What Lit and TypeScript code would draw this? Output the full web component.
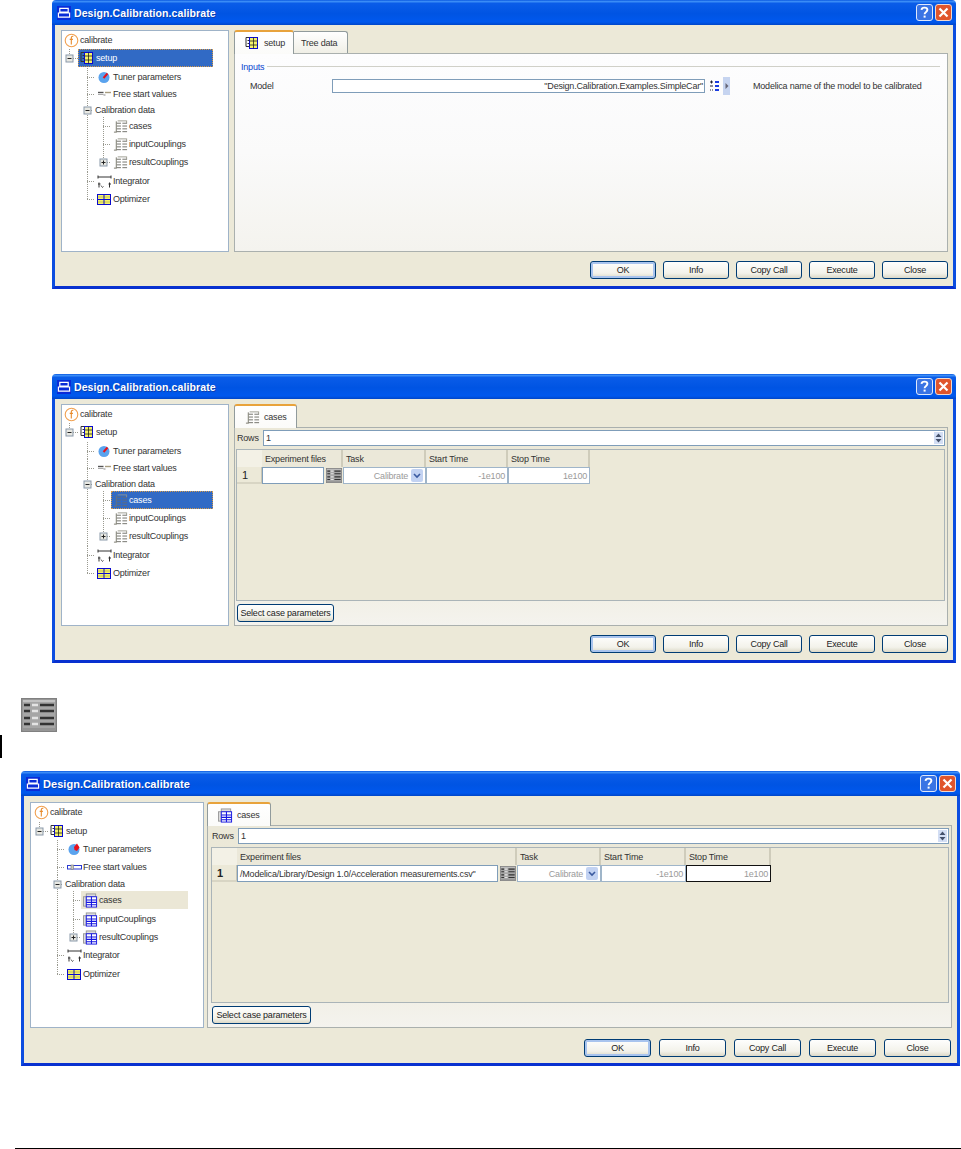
import { LitElement, html, css, svg } from "lit";
import { customElement } from "lit/decorators.js";

type IconName = "fn" | "setup" | "tuner" | "free" | "table" | "integrator" | "optimizer" | "none";
interface Row {
  label: string; icon: IconName; gutter: number;
  v: [number, boolean][]; // vertical line x, full height?
  h?: [number, number]; exp?: [number, string];
}
const TREE: Row[] = [
  { label: "calibrate", icon: "fn", gutter: 0, v: [] },
  { label: "setup", icon: "setup", gutter: 16, v: [[7, false]], h: [11, 16], exp: [7, "-"] },
  { label: "Tuner parameters", icon: "tuner", gutter: 33, v: [[25, true]], h: [25, 33] },
  { label: "Free start values", icon: "free", gutter: 33, v: [[25, true]], h: [25, 33] },
  { label: "Calibration data", icon: "none", gutter: 31, v: [[25, true]], h: [29, 31], exp: [25, "-"] },
  { label: "cases", icon: "table", gutter: 49, v: [[25, true], [41, true]], h: [41, 49] },
  { label: "inputCouplings", icon: "table", gutter: 49, v: [[25, true], [41, true]], h: [41, 49] },
  { label: "resultCouplings", icon: "table", gutter: 49, v: [[25, true], [41, false]], h: [45, 49], exp: [41, "+"] },
  { label: "Integrator", icon: "integrator", gutter: 33, v: [[25, true]], h: [25, 33] },
  { label: "Optimizer", icon: "optimizer", gutter: 33, v: [[25, false]], h: [25, 33] },
];

function windowIcon() {
  return html`<svg class="winicon" width="14" height="14" viewBox="0 0 15 15">
    <rect width="15" height="15" fill="#0a2bd8"/>
    <path d="M3 2.500h9v4H3zM1.500 7.500h12v4.500h-12z" fill="none" stroke="#fff" stroke-width="1.300"/>
  </svg>`;
}
function helpBtn() {
  return html`<svg width="17" height="17" viewBox="0 0 17 17">
    <rect x=".5" y=".5" width="16" height="16" rx="2.5" fill="#3a74e4" stroke="#dfe8fb"/>
    <path d="M5.5 5.8C5.8 3 11.3 2.9 11.4 5.8 11.5 8 8.6 7.800 8.600 10.200" fill="none" stroke="#fff" stroke-width="1.900"/>
    <rect x="7.600" y="11.600" width="2" height="2" fill="#fff"/>
  </svg>`;
}
function closeBtn() {
  return html`<svg width="17" height="17" viewBox="0 0 17 17">
    <rect x=".5" y=".5" width="16" height="16" rx="2.500" fill="#e0552c" stroke="#f2d8cc"/>
    <path d="M4.500 4.500l8 8M12.500 4.500l-8 8" stroke="#fff" stroke-width="2.200"/>
  </svg>`;
}
function expander(x: number, sym: string) {
  return svg`<rect x="${x - 3.5}" y="-3.500" width="7" height="7" fill="#e8e8e2" stroke="#8a99aa"/>
    <path d="M${x - 2} 0h4" stroke="#222"/>
    ${sym === "+" ? svg`<path d="M${x} -2v4" stroke="#222"/>` : null}`;
}
function icon(name: IconName, blue: boolean, dim = false) {
  switch (name) {
    case "fn":
      return html`<svg width="15" height="15" viewBox="0 0 15 15">
        <circle cx="7.500" cy="7.500" r="6.300" fill="#fff" stroke="#f0a050" stroke-width="1.100"/>
        <path d="M9.300 3.400C7.800 3 7.300 4 7.300 5v6.500M5.700 6.400h3.200" fill="none" stroke="#e88a2a" stroke-width="1.100"/>
      </svg>`;
    case "setup":
      return html`<svg width="15" height="14" viewBox="0 0 15 14">
        <path d="M4.500 1.500H1v9h3.500" fill="none" stroke="#333"/>
        <path d="M2.500 4.500h2M2.500 7.500h2" stroke="#333"/>
        <rect x="4.500" y="1.500" width="8" height="11" fill="#f4f26a" stroke="#0a0ad0"/>
        <path d="M8.500 1.500v11M4.500 5h8M4.500 9h8" stroke="#222" stroke-width=".8"/>
      </svg>`;
    case "tuner":
      return html`<svg width="15" height="14" viewBox="0 0 15 14">
        <circle cx="7" cy="7.500" r="5.500" fill="#5aa3ee"/>
        ${blue
          ? svg`<path d="M7 5L10 1.500 12.500 5.500 10 9 7.500 8z" fill="#e8101a"/>`
          : svg`<path d="M6.500 8L10.500 3.500" stroke="#e8101a" stroke-width="2"/>`}
      </svg>`;
    case "free":
      return blue
        ? html`<svg width="15" height="14" viewBox="0 0 15 14">
            <rect x=".5" y="5.500" width="14" height="3.500" fill="#fff" stroke="#2a3ad0"/>
            <rect x="4" y="5" width="2.500" height="4.500" fill="#c8c8c0" stroke="#777" stroke-width=".6"/>
          </svg>`
        : html`<svg width="15" height="14" viewBox="0 0 15 14">
            <path d="M1 5.500h5.500" stroke="#555" stroke-width="1.400"/>
            <path d="M1 7.500h5.500" stroke="#aaa"/>
            <path d="M8 5.500h6" stroke="#a89d80" stroke-width="1.400"/>
            <path d="M6.500 8h2" stroke="#888"/>
          </svg>`;
    case "table":
      return blue
        ? html`<svg width="16" height="15" viewBox="0 0 16 15">
            <rect x="3.500" y=".5" width="10" height="3" fill="#ddd" stroke="#999"/>
            <rect x=".5" y="3.500" width="3" height="10" fill="#ddd" stroke="#999"/>
            <rect x="3.500" y="3.500" width="11" height="11" fill="#fff" stroke="#1414e0"/>
            <path d="M3.500 7h11M3.500 9.500h11M3.500 12h11M9 3.500v11" stroke="#1414e0" stroke-width="1.100"/>
          </svg>`
        : html`<svg class=${dim ? "dim" : ""} width="16" height="15" viewBox="0 0 16 15">
            <path d="M3.500 2v11.500M1 13.500h3" stroke="#77766a" fill="none"/>
            <path d="M4 4h4.500M10 4h5M4 7h4.500M10 7h5M4 10h4.500M10 10h5M4 13h4.500M10 13h5" stroke="#6e6e66"/>
            <path d="M5 1.500h9" stroke="#9a9a8e"/>
            <path d="M14.500 1v3" stroke="#9a9a8e"/>
          </svg>`;
    case "integrator":
      return html`<svg width="15" height="15" viewBox="0 0 15 15">
        <path d="M1 1.500v3M14 1.500v3M1 3h13" stroke="#333" fill="none"/>
        <path d="M2 8.500v5M1 10h2.500M12.500 8.500v5M11.500 10h2.500" stroke="#333" fill="none"/>
        <path d="M4 11.500l1.500 2 1-1" stroke="#555" fill="none"/>
      </svg>`;
    case "optimizer":
      return html`<svg width="15" height="14" viewBox="0 0 15 14">
        <rect x=".5" y="2.500" width="13" height="10" fill="#f4f26a" stroke="#0a0ad0"/>
        <path d="M7 2.500v10M.5 7.500h13" stroke="#0a0ad0"/>
        <path d="M.5 5h13M.5 10h13" stroke="#333" stroke-width=".5" opacity=".5"/>
      </svg>`;
    default:
      return null;
  }
}
function gridButton(w: number, h: number) {
  return html`<svg width=${w} height=${h} viewBox="0 0 36 34" preserveAspectRatio="none">
    <rect width="36" height="34" fill="#a6a6a6"/>
    <path d="M2 2h32v2H2z" fill="#c2c2c2"/>
    <path d="M2 30h32v2H2z" fill="#959595"/>
    <rect x=".7" y=".7" width="34.600" height="32.600" fill="none" stroke="#808080" stroke-width="1.400"/>
    <g stroke-width="2.600">
      <path d="M3 7h6M19 7h14M3 13h6M19 13h14M3 20h6M19 20h14M3 26h6M19 26h14" stroke="#333"/>
      <path d="M11 7h6M11 13h6M11 20h6M11 26h6" stroke="#e4e4e4"/>
    </g>
  </svg>`;
}

@customElement("app-root")
export class AppRoot extends LitElement {
  static styles = css`
    :host { display: block; width: 961px; height: 1149px; background: #fff; font-family: "Liberation Sans", Arial, sans-serif; font-size: 9px; letter-spacing: -.2px; color: #333; overflow: hidden; }
    .page { display: flex; flex-direction: column; height: 1149px; }
    .dialog { display: flex; flex-direction: column; flex: none; border-radius: 4px 4px 0 0; }
    .d1 { width: 904px; height: 289px; margin-left: 52px; }
    .d2 { width: 904px; height: 289px; margin-left: 52px; margin-top: 85px; }
    .d3 { width: 939px; height: 295px; margin-left: 21px; }
    .titlebar { flex: none; height: 25px; display: flex; align-items: center; gap: 3px; padding: 0 4px 0 5px;
      background: linear-gradient(#0a58e0 0, #3a8cf6 6%, #0a5ce8 14%, #0054e3 55%, #0058ee 88%, #0046c8 100%);
      border-radius: 4px 4px 0 0; }
    .title { flex: 1; color: #fff; font-weight: 700; font-size: 10.500px; letter-spacing: .1px; white-space: nowrap; text-shadow: 1px 1px 0 #0a3fb0; }
    .d3 .title { font-size: 11px; letter-spacing: .05px; }
    .winbtns { display: flex; gap: 2px; }
    .winbtns svg, .winicon { display: block; }
    .client { flex: 1; min-height: 0; display: flex; flex-direction: column; background: #ece9d8; border: 3px solid #0c4de0; border-top: 0; border-bottom-color: #0831d0; padding: 5px 5px 7px 6px; }
    .d3 .client { padding: 6px 5px 6px 6px; }
    .main { flex: 1; min-height: 0; display: flex; gap: 5px; }
    .d3 .main { gap: 3px; }
    .tree { flex: none; width: 168px; box-sizing: border-box; background: #fff; border: 1px solid #9fb3c8; overflow: hidden; }
    .d3 .tree { width: 174px; padding-left: 1px; }
    .row { display: flex; align-items: flex-start; }
    .row svg.gut { flex: none; display: block; overflow: visible; }
    .node { display: flex; align-items: center; gap: 1px; height: 18px; padding: 0 2px; white-space: nowrap; box-sizing: border-box; position: relative; flex: none; }
    .slot { flex: none; width: 15px; display: flex; justify-content: center; }
    .slot svg { display: block; }
    .slot svg.dim { opacity: .85; }
    .sel { background: #316ac5; color: #fff; outline: 1px dotted #d59a4a; outline-offset: -1px; flex: 1; margin-right: 15px; }
    .selsoft { background: #ebe7d6; flex: 1; margin-right: 15px; }
    .right { flex: 1; min-width: 0; display: flex; flex-direction: column; }
    .tabs { flex: none; height: 23px; display: flex; align-items: flex-end; }
    .tab { flex: none; box-sizing: border-box; display: flex; align-items: center; gap: 4px; position: relative; white-space: nowrap; }
    .tab.on { height: 24px; margin-bottom: -1px; width: 60px; padding-left: 10px; background: linear-gradient(#fff, #fbfbf9); border: 1px solid #919b9c; border-top: 2px solid #e8a33c; border-bottom: 0; border-radius: 3px 3px 0 0; z-index: 1; }
    .tab.w2 { width: 63px; }
    .tab.w3 { width: 64px; }
    .tab.off { height: 22px; width: 54px; padding-left: 7px; background: linear-gradient(#fff, #f0efe6); border: 1px solid #919b9c; border-left: 0; border-bottom: 0; border-radius: 0 3px 0 0; }
    .panel { flex: 1; min-height: 0; box-sizing: border-box; border: 1px solid #aab0ae; display: flex; flex-direction: column; }
    .panel.plain { background: linear-gradient(#fdfdfe, #fafafa 50%, #f4f3ee); padding: 6px 7px 0 6px; }
    .panel.data { background: linear-gradient(#ebe8d8, #ece9d8 60%, #f4f3ee); padding: 2px 2px 3px 1px; gap: 3px; }
    .d3 .panel.data { padding-left: 3px; }
    .group { display: flex; align-items: center; gap: 3px; height: 13px; color: #0a46d0; }
    .gline { flex: 1; height: 1px; background: #d0d0c8; }
    .model { display: flex; align-items: center; height: 18px; margin-top: 4px; }
    .mlabel { flex: none; width: 91px; padding-left: 9px; box-sizing: border-box; }
    .input { box-sizing: border-box; background: #fff; border: 1px solid #7f9db9; display: flex; align-items: center; white-space: nowrap; overflow: hidden; }
    .minput { flex: none; width: 373px; height: 14px; justify-content: flex-end; padding-right: 1px; }
    .micon { flex: none; margin-left: 5px; display: block; }
    .mbtn { flex: none; margin-left: 3px; width: 7px; height: 18px; background: #c6d4f0; display: flex; align-items: center; justify-content: center; }
    .mdesc { margin-left: 23px; white-space: nowrap; }
    .rows { flex: none; display: flex; align-items: center; height: 16px; margin-left: 1px; }
    .rlabel { flex: none; width: 26px; }
    .rows .input { flex: 1; height: 16px; padding-left: 2px; justify-content: space-between; padding-right: 1px; }
    .spin { display: block; flex: none; }
    .table { flex: 1; min-height: 0; border: 1px solid #aab4b8; background: #ece9d8; box-sizing: border-box; }
    .grid { display: grid; }
    .d2 .grid { grid-template-columns: 25px 81px 83px 82px 82px; width: 353px; }
    .d3 .grid { grid-template-columns: 25px 280px 84px 85px 85px; width: 559px; }
    .hc { height: 17px; box-sizing: border-box; display: flex; align-items: center; padding-left: 3px; border-right: 2px solid #cfccbb; background: #ebe8d9; white-space: nowrap; }
    .hc.corner { background: #f3f1e6; border-right: 0; }
    .rc { height: 17px; box-sizing: border-box; display: flex; align-items: center; }
    .num { padding-left: 5px; border-right: 1px solid #c8c5b4; border-bottom: 2px solid #d8d5c4; font-size: 11px; color: #222; }
    .d3 .num { font-weight: 700; }
    .ro { flex: 1; height: 100%; justify-content: flex-end; padding-right: 2px; color: #9a9a9a; border-color: #9fb5c9; }
    .ro.focus { border: 1.500px solid #111; }
    .filecell { gap: 2px; padding-right: 1px; }
    .filecell .input { flex: 1; height: 100%; padding-left: 2px; min-width: 0; color: #333; }
    .filecell svg { display: block; flex: none; }
    .drop { flex: none; width: 12px; height: 13px; margin-left: 3px; background: #c2d2f2; display: flex; align-items: center; justify-content: center; border-radius: 2px; }
    .selbtn { flex: none; align-self: flex-start; margin-left: 1px; }
    .btn { box-sizing: border-box; height: 18px; background: linear-gradient(#fefefd, #f3f2ea 70%, #dcd9c8); border: 1px solid #003c74; border-radius: 3px; display: flex; align-items: center; justify-content: center; color: #222; white-space: nowrap; }
    .selbtn.btn { width: 97px; }
    .d3 .selbtn.btn { width: 99px; }
    .buttons { flex: none; display: flex; justify-content: flex-end; gap: 7px; margin-top: 9px; }
    .d3 .buttons { gap: 8px; margin-top: 11px; padding-right: 1px; }
    .buttons .btn { width: 66px; }
    .d3 .buttons .btn { width: 67px; }
    .btn.def { box-shadow: inset 0 0 0 2px #a9c4ee; }
    .bigicon { flex: none; margin: 35px 0 0 21px; display: block; }
    .bigicon svg { display: block; }
    .cursor { flex: none; width: 2px; height: 23px; margin-top: 3px; background: #000; }
    .cursorgap { flex: none; height: 13px; }
    .rule { flex: none; height: 1px; background: #000; margin: auto 0 0 15px; }
  `;

  private tree(heights: number[], blue: boolean, selIdx: number, soft: boolean) {
    return html`<div class="tree">
      ${TREE.map((r, i) => {
        const h = heights[i];
        const mid = 9;
        const selected = i === selIdx;
        return html`<div class="row" style="height:${h}px">
          <svg class="gut" width=${r.gutter} height=${h} viewBox="0 0 ${r.gutter} ${h}">
            ${r.v.map(([x, full]) => svg`<path d="M${x + 0.5} 0V${full ? h : mid}" stroke="#9a9a90" stroke-dasharray="1 1"/>`)}
            ${r.h ? svg`<path d="M${r.h[0]} ${mid + 0.5}H${r.h[1]}" stroke="#9a9a90" stroke-dasharray="1 1"/>` : null}
            ${r.exp ? svg`<g transform="translate(.5 ${mid + 0.5})">${expander(r.exp[0], r.exp[1])}</g>` : null}
          </svg>
          <div class="node ${selected ? (soft ? "selsoft" : "sel") : ""}">
            ${r.icon !== "none"
              ? html`<span class="slot">${icon(r.icon, blue, selected && !soft)}</span>`
              : null}
            <span>${r.label}</span>
          </div>
        </div>`;
      })}
    </div>`;
  }

  private spin() {
    return html`<svg class="spin" width="9" height="12" viewBox="0 0 9 12">
      <rect width="9" height="12" fill="#d3def4"/>
      <path d="M4.500 1.500L7.500 5h-6zM4.500 10.500L7.500 7h-6z" fill="#44506a"/>
    </svg>`;
  }

  private dataPanel(file: string, focus: boolean) {
    return html`<div class="panel data">
      <div class="rows"><span class="rlabel">Rows</span><div class="input"><span>1</span>${this.spin()}</div></div>
      <div class="table">
        <div class="grid">
          <div class="hc corner"></div>
          <div class="hc">Experiment files</div>
          <div class="hc">Task</div>
          <div class="hc">Start Time</div>
          <div class="hc">Stop Time</div>
          <div class="rc num">1</div>
          <div class="rc filecell"><div class="input">${file}</div>${gridButton(16, 15)}</div>
          <div class="rc"><div class="input ro">Calibrate<span class="drop"><svg width="8" height="6" viewBox="0 0 8 6"><path d="M1 1l3 3 3-3" fill="none" stroke="#3a5aa0" stroke-width="1.600"/></svg></span></div></div>
          <div class="rc"><div class="input ro">-1e100</div></div>
          <div class="rc"><div class="input ro ${focus ? "focus" : ""}">1e100</div></div>
        </div>
      </div>
      <div class="btn selbtn">Select case parameters</div>
    </div>`;
  }

  private dialog(cls: string, treeEl: unknown, right: unknown) {
    return html`<div class="dialog ${cls}">
      <div class="titlebar">${windowIcon()}<span class="title">Design.Calibration.calibrate</span>
        <div class="winbtns">${helpBtn()}${closeBtn()}</div></div>
      <div class="client">
        <div class="main">${treeEl}<div class="right">${right}</div></div>
        <div class="buttons">
          <div class="btn def">OK</div><div class="btn">Info</div><div class="btn">Copy Call</div><div class="btn">Execute</div><div class="btn">Close</div>
        </div>
      </div>
    </div>`;
  }

  render() {
    const h1 = [18, 19, 17, 16, 16, 18, 18, 19, 18, 18];
    const h3 = [19, 18, 18, 17, 16, 19, 18, 18, 19, 18];
    return html`<div class="page">
      ${this.dialog("d1", this.tree(h1, false, 1, false), html`
        <div class="tabs">
          <div class="tab on"><span class="slot">${icon("setup", false)}</span>setup</div>
          <div class="tab off">Tree data</div>
        </div>
        <div class="panel plain">
          <div class="group"><span>Inputs</span><span class="gline"></span></div>
          <div class="model">
            <span class="mlabel">Model</span>
            <div class="input minput">"Design.Calibration.Examples.SimpleCar"</div>
            <svg class="micon" width="10" height="12" viewBox="0 0 10 12">
              <path d="M0 2h3M1.500 .5v3M0 6h3M0 10h1M2 10h1" stroke="#223" />
              <path d="M5 2h4M5 6h4M5 10h4" stroke="#1a3ce0" stroke-width="2"/>
            </svg>
            <div class="mbtn"><svg width="4" height="6" viewBox="0 0 4 6"><path d="M.5 0L3.500 3 .5 6z" fill="#667"/></svg></div>
            <span class="mdesc">Modelica name of the model to be calibrated</span>
          </div>
        </div>`)}
      ${this.dialog("d2", this.tree(h1, false, 5, false), html`
        <div class="tabs"><div class="tab on w2"><span class="slot">${icon("table", false)}</span>cases</div></div>
        ${this.dataPanel("", false)}`)}
      <div class="bigicon">${gridButton(36, 34)}</div>
      <div class="cursor"></div>
      <div class="cursorgap"></div>
      ${this.dialog("d3", this.tree(h3, true, 5, true), html`
        <div class="tabs"><div class="tab on w3"><span class="slot">${icon("table", true)}</span>cases</div></div>
        ${this.dataPanel("/Modelica/Library/Design 1.0/Acceleration measurements.csv\"", true)}`)}
      <div class="rule"></div>
    </div>`;
  }
}
